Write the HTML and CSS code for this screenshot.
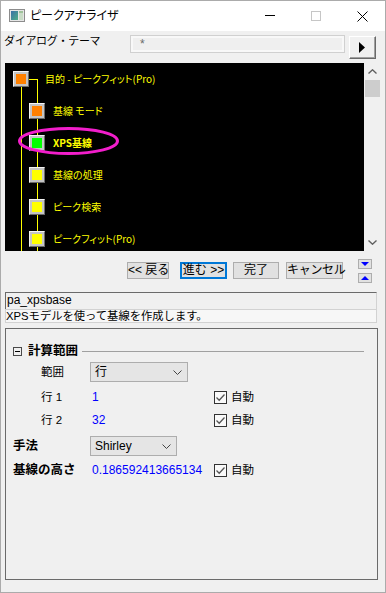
FILE: index.html
```html
<!DOCTYPE html>
<html lang="ja">
<head>
<meta charset="utf-8">
<title>ピークアナライザ</title>
<link rel="stylesheet" href="styles.css">
</head>
<body>
<div class="window">
  <div class="titlebar">
    <svg class="app-icon" width="16" height="14" viewBox="0 0 16 14">
      <defs>
        <linearGradient id="ig" x1="0" y1="0" x2="1" y2="1">
          <stop offset="0" stop-color="#3a6fa8"/>
          <stop offset="1" stop-color="#4fae86"/>
        </linearGradient>
      </defs>
      <rect x="0.5" y="0.5" width="15" height="12" fill="#e6e6e6" stroke="#8c8c8c"/>
      <rect x="2" y="2" width="7" height="9" fill="url(#ig)"/>
      <rect x="10" y="2" width="4" height="9" fill="#c9dcc6"/>
      <rect x="10" y="2" width="4" height="2" fill="#9fc29a"/>
    </svg>
    <span class="title">ピークアナライザ</span>
    <div class="controls">
      <span class="ctl"><svg width="10" height="10" viewBox="0 0 10 10"><path d="M0 4.5H10" stroke="#000" stroke-width="1"/></svg></span>
      <span class="ctl"><svg width="10" height="10" viewBox="0 0 10 10"><rect x="0.5" y="0.5" width="9" height="9" fill="none" stroke="#c6c6c6"/></svg></span>
      <span class="ctl"><svg width="11" height="11" viewBox="0 0 11 11"><path d="M0.5 0.5L10.5 10.5M10.5 0.5L0.5 10.5" stroke="#000" stroke-width="1"/></svg></span>
    </div>
  </div>

  <div class="theme-row">
    <span class="theme-label">ダイアログ・テーマ</span>
    <div class="theme-field">*</div>
    <div class="theme-btn"><svg width="7" height="11" viewBox="0 0 7 11"><path d="M0 0L6 5.5L0 11Z" fill="#000"/></svg></div>
  </div>

  <div class="tree-wrap">
    <div class="tree">
      <svg class="tree-lines" width="359" height="188" viewBox="0 0 359 188">
        <path d="M16.5 24V188M24 16.5H32.5M32.5 16V188" stroke="#ffff00" stroke-width="1" fill="none"/>
      </svg>
      <div class="node root"><span class="box orange"></span><span class="node-text">目的 - ピークフィット(Pro)</span></div>
      <div class="node"><span class="box orange"></span><span class="node-text">基線 モード</span></div>
      <div class="node"><span class="box green"></span><span class="node-text bold">XPS基線</span></div>
      <div class="node"><span class="box yellow"></span><span class="node-text">基線の処理</span></div>
      <div class="node"><span class="box yellow"></span><span class="node-text">ピーク検索</span></div>
      <div class="node"><span class="box yellow"></span><span class="node-text">ピークフィット(Pro)</span></div>
      <svg class="highlight" width="359" height="188" viewBox="0 0 359 188">
        <ellipse cx="63.5" cy="78" rx="49" ry="12.5" fill="none" stroke="#f21ecb" stroke-width="3"/>
      </svg>
    </div>
    <div class="scrollbar">
      <div class="sb-btn"><svg width="9" height="5" viewBox="0 0 9 5"><path d="M0.5 4.5L4.5 0.8L8.5 4.5" stroke="#606060" stroke-width="1.4" fill="none"/></svg></div>
      <div class="sb-track"><div class="sb-thumb"></div></div>
      <div class="sb-btn"><svg width="9" height="5" viewBox="0 0 9 5"><path d="M0.5 0.5L4.5 4.2L8.5 0.5" stroke="#606060" stroke-width="1.4" fill="none"/></svg></div>
    </div>
  </div>

  <div class="nav-row">
    <div class="btn back">&lt;&lt; 戻る</div>
    <div class="btn next focused">進む &gt;&gt;</div>
    <div class="btn done">完了</div>
    <div class="btn cancel">キャンセル</div>
    <div class="arrows">
      <div class="arrow-btn"><svg width="8" height="4" viewBox="0 0 8 4"><path d="M0 0H8L4 4Z" fill="#0000ff"/></svg></div>
      <div class="arrow-btn"><svg width="8" height="4" viewBox="0 0 8 4"><path d="M0 4H8L4 0Z" fill="#0000ff"/></svg></div>
    </div>
  </div>

  <div class="info">
    <div class="info-name">pa_xpsbase</div>
    <div class="info-desc">XPSモデルを使って基線を作成します。</div>
  </div>

  <div class="panel">
    <div class="group-head">
      <span class="collapse"></span>
      <span class="group-title">計算範囲</span>
      <span class="rule"></span>
    </div>
    <div class="row r1">
      <span class="lbl sub">範囲</span>
      <div class="val">
        <div class="select wide"><span>行</span><svg class="chev" width="9" height="5" viewBox="0 0 9 5"><path d="M0.5 0.5L4.5 4.5L8.5 0.5" stroke="#444" fill="none"/></svg></div>
      </div>
    </div>
    <div class="row r2">
      <span class="lbl sub">行 1</span>
      <span class="val num">1</span>
      <span class="chk"><svg width="11" height="11" viewBox="0 0 11 11"><path d="M1.5 5.5L4.2 8.2L9.5 2.5" stroke="#555" stroke-width="1.3" fill="none"/></svg></span>
      <span class="auto">自動</span>
    </div>
    <div class="row r3">
      <span class="lbl sub">行 2</span>
      <span class="val num">32</span>
      <span class="chk"><svg width="11" height="11" viewBox="0 0 11 11"><path d="M1.5 5.5L4.2 8.2L9.5 2.5" stroke="#555" stroke-width="1.3" fill="none"/></svg></span>
      <span class="auto">自動</span>
    </div>
    <div class="row r4">
      <span class="lbl main">手法</span>
      <div class="val">
        <div class="select narrow"><span>Shirley</span><svg class="chev" width="9" height="5" viewBox="0 0 9 5"><path d="M0.5 0.5L4.5 4.5L8.5 0.5" stroke="#444" fill="none"/></svg></div>
      </div>
    </div>
    <div class="row r5">
      <span class="lbl main">基線の高さ</span>
      <span class="val num">0.186592413665134</span>
      <span class="chk"><svg width="11" height="11" viewBox="0 0 11 11"><path d="M1.5 5.5L4.2 8.2L9.5 2.5" stroke="#555" stroke-width="1.3" fill="none"/></svg></span>
      <span class="auto">自動</span>
    </div>
  </div>
</div>
</body>
</html>
```
FILE: styles.css
```css
* { box-sizing: border-box; }
html, body { margin: 0; padding: 0; }
body {
  width: 386px;
  height: 593px;
  overflow: hidden;
  background: #f0f0f0;
  font-family: "Liberation Sans", "Noto Sans CJK JP", sans-serif;
  font-size: 12px;
  color: #000;
}
.window {
  width: 386px;
  height: 593px;
  border: 1px solid #ababab;
  background: #f0f0f0;
  display: flex;
  flex-direction: column;
}

/* title bar */
.titlebar {
  height: 30px;
  flex-shrink: 0;
  background: #fff;
  display: flex;
  align-items: center;
}
.app-icon { margin-left: 8px; display: block; }
.title {
  margin-left: 5px;
  font-size: 12px;
  line-height: 16px;
  font-feature-settings: "palt";
}
.controls { margin-left: auto; display: flex; height: 100%; }
.ctl {
  width: 46px;
  height: 30px;
  display: flex;
  align-items: center;
  justify-content: center;
}
.ctl svg { display: block; }

/* theme row */
.theme-row {
  height: 32px;
  flex-shrink: 0;
  display: flex;
  align-items: flex-start;
}
.theme-label {
  width: 126px;
  margin-left: 3px;
  margin-top: 3px;
  font-size: 11px;
  line-height: 14px;
  letter-spacing: -0.3px;
}
.theme-field {
  width: 215px;
  height: 18px;
  margin-top: 4px;
  border: 1px solid #d0d0d0;
  box-shadow: inset 0 0 0 2px #f8f8f8;
  background: #efefef;
  color: #6a6a6a;
  padding-left: 9px;
  font-size: 12px;
  line-height: 17px;
}
.theme-btn {
  width: 27px;
  height: 23px;
  margin-top: 5px;
  margin-left: 4px;
  border: 1px solid;
  border-color: #ffffff #696969 #696969 #ffffff;
  box-shadow: inset -1px -1px 0 #a0a0a0;
  background: #f0f0f0;
  display: flex;
  align-items: center;
  justify-content: center;
}
.theme-btn svg { display: block; }

/* tree */
.tree-wrap {
  height: 188px;
  width: 376px;
  margin-left: 4px;
  flex-shrink: 0;
  display: flex;
}
.tree {
  position: relative;
  width: 359px;
  height: 188px;
  background: #000;
  overflow: hidden;
}
.tree-lines, .highlight {
  position: absolute;
  left: 0;
  top: 0;
  display: block;
}
.node {
  position: relative;
  height: 32px;
  display: flex;
  align-items: center;
  padding-left: 24px;
}
.node.root { padding-left: 8px; }
.node-text {
  margin-left: 8px;
  color: #ffff00;
  font-family: "Noto Sans CJK JP", sans-serif;
  font-size: 10px;
  line-height: 14px;
  font-feature-settings: "palt";
  white-space: nowrap;
}
.node.root .node-text { margin-left: 16px; }
.node-text.bold { font-weight: bold; }
.box {
  width: 16px;
  height: 16px;
  flex-shrink: 0;
  border: 1px solid;
  border-color: #f4f4f4 #6a6a6a #6a6a6a #f4f4f4;
  background: #c4c4c4;
  padding: 2px;
}
.box::after {
  content: "";
  display: block;
  width: 100%;
  height: 100%;
}
.box.orange::after { background: #ff8000; }
.box.green::after { background: #00ff00; }
.box.yellow::after { background: #ffff00; }

.scrollbar {
  width: 17px;
  background: #f0f0f0;
  display: flex;
  flex-direction: column;
}
.sb-btn {
  height: 17px;
  display: flex;
  align-items: center;
  justify-content: center;
}
.sb-btn svg { display: block; }
.sb-track { flex: 1; padding-left: 1px; }
.sb-thumb { width: 15px; height: 17px; background: #cdcdcd; }

/* navigation buttons */
.nav-row {
  height: 41px;
  flex-shrink: 0;
  display: flex;
  align-items: flex-start;
}
.btn {
  height: 17px;
  margin-top: 11px;
  border: 1px solid #adadad;
  background: #e1e1e1;
  font-size: 12px;
  line-height: 15px;
  text-align: center;
  white-space: nowrap;
}
.btn.back { margin-left: 126px; width: 42px; }
.btn.next { margin-left: 11px; width: 47px; }
.btn.focused { border: 2px solid #0078d7; line-height: 13px; }
.btn.done { margin-left: 6px; width: 46px; }
.btn.cancel { margin-left: 7px; width: 57px; letter-spacing: -0.3px; }
.arrows {
  margin-left: 15px;
  margin-top: 8px;
  display: flex;
  flex-direction: column;
  gap: 4px;
}
.arrow-btn {
  width: 14px;
  height: 10px;
  border: 1px solid #adadad;
  background: #e1e1e1;
  display: flex;
  align-items: center;
  justify-content: center;
}
.arrow-btn svg { display: block; }

/* info */
.info {
  height: 31px;
  width: 372px;
  margin-left: 4px;
  flex-shrink: 0;
}
.info-name {
  height: 17px;
  border-top: 1px solid #6a6a6a;
  border-left: 1px solid #6a6a6a;
  border-right: 1px solid #d2d2d2;
  background: #f0f0f0;
  padding-left: 1px;
  line-height: 15px;
  font-size: 12px;
}
.info-desc {
  height: 14px;
  border: 1px solid #d2d2d2;
  background: #f7f7f7;
  font-size: 11.3px;
  line-height: 12px;
  white-space: nowrap;
  overflow: hidden;
}

/* panel */
.panel {
  margin-top: 5px;
  margin-left: 4px;
  width: 373px;
  height: 252px;
  flex-shrink: 0;
  border: 1px solid #6a6a6a;
  padding: 12px 0 0 7px;
  display: flex;
  flex-direction: column;
}
.group-head {
  height: 20px;
  display: flex;
  align-items: center;
}
.collapse {
  position: relative;
  width: 9px;
  height: 9px;
  border: 1px solid #4a4a4a;
  flex-shrink: 0;
}
.collapse::after {
  content: "";
  position: absolute;
  left: 1px;
  right: 1px;
  top: 3px;
  height: 1px;
  background: #000;
}
.group-title {
  margin-left: 6px;
  font-weight: bold;
  font-size: 12.5px;
  line-height: 16px;
}
.rule {
  flex: 1;
  height: 1px;
  margin-left: 4px;
  margin-right: 13px;
  background: #a0a0a0;
}
.row {
  height: 20px;
  display: flex;
  align-items: center;
}
.r1 { margin-top: 1px; }
.r2 { margin-top: 5px; }
.r3 { margin-top: 3px; }
.r4 { margin-top: 6px; }
.r5 { margin-top: 4px; }
.lbl {
  width: 77px;
  flex-shrink: 0;
  line-height: 16px;
}
.lbl.sub { padding-left: 28px; font-size: 11.5px; }
.lbl.main { font-weight: bold; font-size: 12.5px; }
.val {
  width: 124px;
  flex-shrink: 0;
  font-size: 12px;
  line-height: 16px;
}
.val.num { color: #0000ff; padding-left: 2px; }
.select {
  height: 20px;
  border: 1px solid #adadad;
  background: #e5e5e5;
  display: flex;
  align-items: center;
  padding-left: 4px;
  padding-right: 5px;
  font-size: 12px;
}
.select.wide { width: 98px; }
.select.narrow { width: 87px; }
.select .chev { margin-left: auto; display: block; }
.chk {
  width: 13px;
  height: 13px;
  border: 1px solid #333;
  background: #fafafa;
  flex-shrink: 0;
  display: flex;
  align-items: center;
  justify-content: center;
}
.chk svg { display: block; }
.auto {
  margin-left: 4px;
  font-size: 11.5px;
  line-height: 16px;
}
```
